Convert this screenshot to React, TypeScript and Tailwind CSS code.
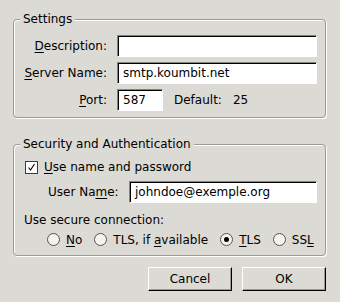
import React from 'react';

const bg = 'bg-[#dcdad5]';

const Mn = ({ c }: { c: string }) => <span className="underline decoration-1 underline-offset-[2px]">{c}</span>;

const Field = ({ value, className }: { value: string; className: string }) => (
  <div
    className={`h-[22px] bg-white border border-[#85837e] border-r-white border-b-white shadow-[inset_1px_1px_0_#000] pl-[5px] flex items-center ${className}`}
  >
    {value}
  </div>
);

const Radio = ({ checked }: { checked?: boolean }) => (
  <span className="w-[13px] h-[13px] rounded-full border border-[#55544f] bg-[#f4f3f1] flex items-center justify-center">
    {checked && <span className="w-[5px] h-[5px] rounded-full bg-black" />}
  </span>
);

const Option = ({ children, checked }: { children: React.ReactNode; checked?: boolean }) => (
  <span className="flex items-center gap-[6px]">
    <Radio checked={checked} />
    <span>{children}</span>
  </span>
);

const Button = ({ label }: { label: string }) => (
  <button className="w-[84px] h-[24px] border border-t-white border-l-white border-r-black border-b-black shadow-[inset_-1px_-1px_0_#9a9893] bg-[#dcdad5] flex items-center justify-center">
    {label}
  </button>
);

const fieldset =
  'rounded-[4px] border border-[#9c9a94] shadow-[inset_1px_1px_0_#fff,1px_1px_0_#fff] pl-[10px] pr-[8px]';
const legend = `-ml-[4px] px-[3px] leading-[14px] ${bg}`;

export default function App() {
  return (
    <div className={`w-[340px] h-[302px] ${bg} pl-[13px] pr-[14px] pt-[12px] text-[12px] text-black font-['DejaVu_Sans',sans-serif]`}>
      <fieldset className={`${fieldset} pt-[9px] pb-[6px]`}>
        <legend className={legend}>Settings</legend>
        <div className="flex flex-col gap-[5px]">
          <div className="flex items-center gap-[10px]">
            <span className="w-[83px] text-right"><Mn c="D" />escription:</span>
            <Field value="" className="w-[200px]" />
          </div>
          <div className="flex items-center gap-[10px]">
            <span className="w-[83px] text-right whitespace-nowrap"><Mn c="S" />erver Name:</span>
            <Field value="smtp.koumbit.net" className="w-[200px]" />
          </div>
          <div className="flex items-center gap-[10px]">
            <span className="w-[83px] text-right"><Mn c="P" />ort:</span>
            <Field value="587" className="w-[46px]" />
            <span className="ml-[1px]">Default:</span>
            <span className="ml-[1px]">25</span>
          </div>
        </div>
      </fieldset>

      <fieldset className={`${fieldset} mt-[19px] pt-[5px] pb-[7px]`}>
        <legend className={legend}>Security and Authentication</legend>
        <div className="h-[22px] flex items-center gap-[6px]">
          <span className="ml-[1px] w-[13px] h-[13px] border border-[#3c3b38] bg-white flex items-center justify-center">
            <svg width="11" height="11" viewBox="0 0 11 11">
              <path d="M2.5 5.5 L4.5 8 L8.5 2" fill="none" stroke="#000" strokeWidth="1.1" />
            </svg>
          </span>
          <span><Mn c="U" />se name and password</span>
        </div>
        <div className="mt-[3px] pl-[24px] flex items-center">
          <span className="w-[81px] whitespace-nowrap">User Na<Mn c="m" />e:</span>
          <Field value="johndoe@exemple.org" className="w-[188px]" />
        </div>
        <div className="mt-[9px] h-[16px] flex items-center">Use secure connection:</div>
        <div className="mt-[3px] h-[17px] pl-[23px] flex items-center gap-[12px] whitespace-nowrap">
          <Option><Mn c="N" />o</Option>
          <Option>TLS, if <Mn c="a" />vailable</Option>
          <Option checked><Mn c="T" />LS</Option>
          <Option>SS<Mn c="L" /></Option>
        </div>
      </fieldset>

      <div className="mt-[11px] flex justify-end gap-[10px]">
        <Button label="Cancel" />
        <Button label="OK" />
      </div>
    </div>
  );
}
